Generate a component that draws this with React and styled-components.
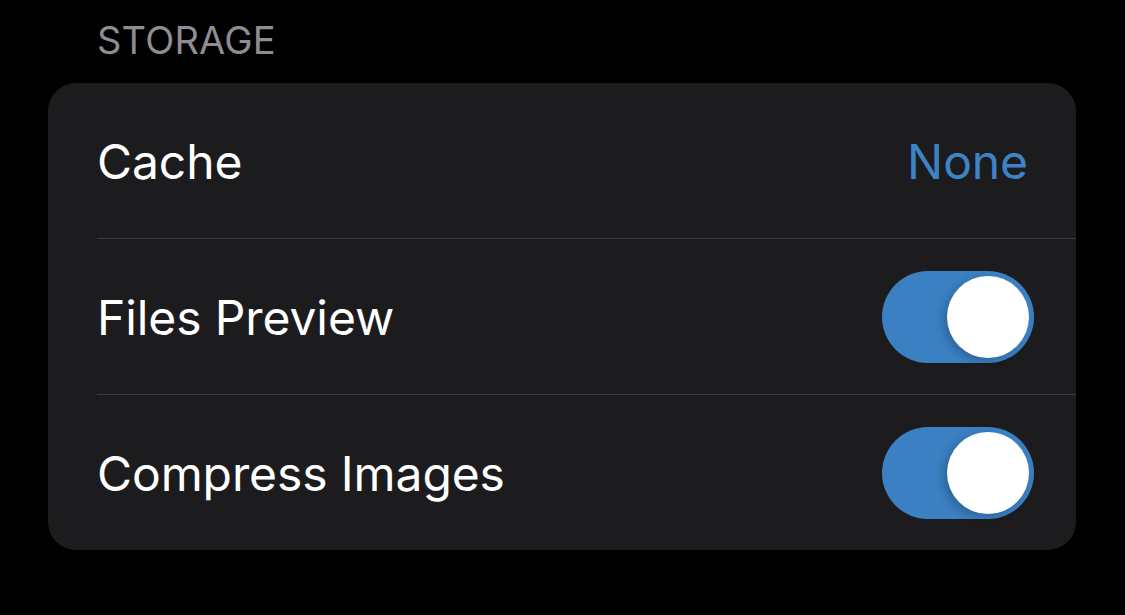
import styled, { createGlobalStyle } from "styled-components";

const Global = createGlobalStyle`
  html, body {
    margin: 0;
    background: #000;
    font-family: Inter, "Liberation Sans", sans-serif;
    -webkit-font-smoothing: antialiased;
  }
`;

const Page = styled.div`
  width: 1125px;
  height: 615px;
  padding: 17px 49px 0 48px;
  box-sizing: border-box;
`;

const SectionTitle = styled.div`
  color: #8d8d93;
  font-size: 38px;
  line-height: 46px;
  padding-left: 49px;
  margin-bottom: 20px;
  letter-spacing: 0.2px;
`;

const Card = styled.div`
  background: #1c1c1e;
  border-radius: 28px;
  overflow: hidden;
`;

const Row = styled.div`
  height: 156px;
  display: flex;
  align-items: center;
  justify-content: space-between;
  margin-left: 49px;
  padding-right: ${(p) => (p.$toggle ? "42px" : "48px")};
  border-top: ${(p) => (p.$first ? "none" : "1px solid #3a3a3c")};
  box-sizing: border-box;
  &:first-child {
    height: 155px;
  }
`;

const Label = styled.span`
  color: #fff;
  font-size: 48px;
  letter-spacing: -0.1px;
  padding-top: 2px;
`;

const Value = styled.span`
  color: #3d84c6;
  font-size: 48px;
  letter-spacing: -0.1px;
  padding-top: 2px;
`;

const Track = styled.div`
  width: 152px;
  height: 92px;
  border-radius: 46px;
  background: #3a80c3;
  display: flex;
  align-items: center;
  justify-content: ${(p) => (p.$on ? "flex-end" : "flex-start")};
  padding: 0 5px;
  box-sizing: border-box;
`;

const Knob = styled.div`
  width: 82px;
  height: 82px;
  border-radius: 50%;
  background: #fff;
  box-shadow: -4px 3px 8px rgba(0, 0, 0, 0.22);
`;

const Toggle = ({ on }) => (
  <Track $on={on}>
    <Knob />
  </Track>
);

export default function App() {
  return (
    <Page>
      <Global />
      <SectionTitle>STORAGE</SectionTitle>
      <Card>
        <Row $first>
          <Label>Cache</Label>
          <Value>None</Value>
        </Row>
        <Row $toggle>
          <Label>Files Preview</Label>
          <Toggle on />
        </Row>
        <Row $toggle>
          <Label>Compress Images</Label>
          <Toggle on />
        </Row>
      </Card>
    </Page>
  );
}
